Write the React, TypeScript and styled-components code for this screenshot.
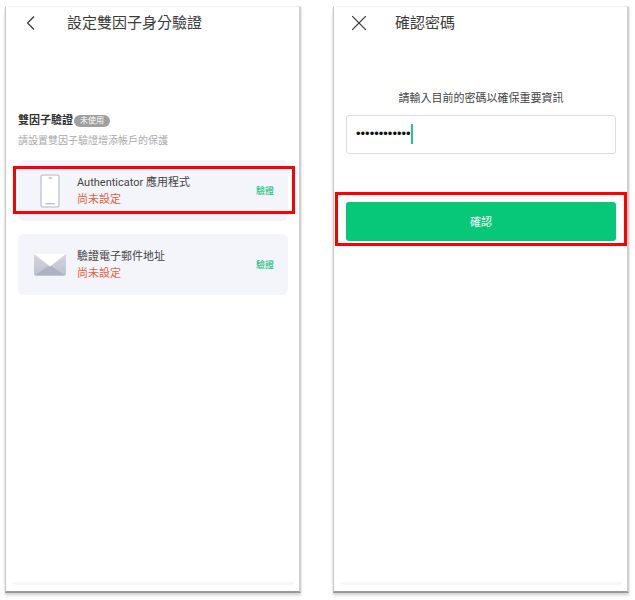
import React, { useState } from "react";
import styled, { createGlobalStyle } from "styled-components";

const GlobalStyle = createGlobalStyle`
  *, *::before, *::after { box-sizing: border-box; }
  body {
    margin: 0;
    background: #fff;
    color: #444;
    font-family: Roboto, "Noto Sans CJK TC", sans-serif;
  }
  button, input { font: inherit; margin: 0; }
`;

const Page = styled.main`
  display: grid;
  grid-template-columns: 1fr 1fr;
  gap: 32px;
  min-height: 100vh;
  padding: 6px 6px 7px 5px;
`;

const Screen = styled.section`
  display: flex;
  flex-direction: column;
  padding: 0 11px 0 12px;
  background: #fff;
  border: 1px solid #c8c8c8;
  border-top-color: #f2f2f2;
  border-right: 2px solid #d0d0d0;
  border-bottom: 2px solid #999;
  box-shadow: 0 2px 3px rgba(0, 0, 0, 0.2);
`;

const Header = styled.header`
  display: flex;
  align-items: center;
  gap: 28px;
  height: 32px;
`;

const IconButton = styled.button`
  display: flex;
  padding: 0 0 0 5px;
  border: 0;
  background: none;
  color: #333;
`;

const Title = styled.h1`
  margin: 0;
  font-size: 15px;
  line-height: 20px;
  font-weight: 400;
  color: #3c3c3c;
`;

const Section = styled.div`
  margin-top: 73px;
`;

const Heading = styled.div`
  display: flex;
  align-items: center;
  gap: 1px;
`;

const SectionTitle = styled.h2`
  margin: 0;
  font-size: 11px;
  line-height: 18px;
  font-weight: 700;
  color: #333;
`;

const Badge = styled.span`
  padding: 0 6px;
  border-radius: 6px;
  background: #a0a0a0;
  color: #fff;
  font-size: 8px;
  line-height: 12px;
`;

const Description = styled.p`
  margin: 2px 0 10px;
  font-size: 10px;
  line-height: 18px;
  color: #aaa;
`;

const MethodList = styled.ul`
  display: flex;
  flex-direction: column;
  gap: 13px;
  margin: 0;
  padding: 0;
  list-style: none;
`;

const Method = styled.li`
  position: relative;
  display: flex;
  align-items: center;
  gap: 10px;
  min-height: 61px;
  padding: 0 14px 0 15px;
  border-radius: 6px;
  background: #f4f5fa;
`;

const MethodIcon = styled.span`
  display: flex;
  justify-content: center;
  width: 34px;
`;

const MethodText = styled.div`
  flex: 1;
  font-size: 11px;
  line-height: 17px;
`;

const MethodName = styled.div`
  color: #444;
`;

const MethodStatus = styled.div`
  color: #e8603f;
`;

const VerifyButton = styled.button`
  padding: 0;
  border: 0;
  background: none;
  color: #2cc487;
  font-size: 9px;
  line-height: 16px;
  font-weight: 500;
`;

const Highlight = styled.span<{ $inset: string }>`
  position: absolute;
  inset: ${(p) => p.$inset};
  border: 3px solid #f00;
  pointer-events: none;
`;

const BottomBar = styled.div`
  height: 3px;
  margin: auto -6px 6px;
  background: #f7f7f7;
`;

const Form = styled.form`
  display: flex;
  flex-direction: column;
  margin-top: 51px;
`;

const Prompt = styled.label`
  margin-bottom: 7px;
  text-align: center;
  font-size: 11px;
  line-height: 18px;
  color: #444;
`;

const Field = styled.div`
  display: flex;
  align-items: center;
  height: 39px;
  padding: 0 9px 1px;
  border: 1px solid #dedede;
  border-radius: 3px;
`;

const PasswordInput = styled.input`
  field-sizing: content;
  max-width: 100%;
  padding: 0;
  border: 0;
  outline: 0;
  background: none;
  color: #111;
  caret-color: transparent;
  font-family: "Liberation Sans", sans-serif;
  font-size: 13px;
  line-height: 20px;
`;

const Caret = styled.span`
  width: 2px;
  height: 20px;
  background: #2cc487;
`;

const SubmitWrap = styled.div`
  position: relative;
  margin-top: 48px;
`;

const SubmitButton = styled.button`
  display: block;
  width: 100%;
  height: 39px;
  padding: 0 0 2px;
  border: 0;
  border-radius: 3px;
  background: #07c778;
  color: #fff;
  font-size: 11px;
`;

const BackIcon = () => (
  <svg width="16" height="16" viewBox="0 0 16 16" fill="none" stroke="currentColor" strokeWidth="1.2" aria-hidden="true">
    <path d="M11 1.5 4.500 8l6.500 6.500" />
  </svg>
);

const CloseIcon = () => (
  <svg width="16" height="16" viewBox="0 0 16 16" fill="none" stroke="currentColor" strokeWidth="1.2" aria-hidden="true">
    <path d="M1.200 1.200 14.800 14.800M14.800 1.200 1.200 14.800" />
  </svg>
);

const PhoneIcon = () => (
  <svg width="20" height="34" viewBox="0 0 20 34" aria-hidden="true">
    <rect x="1" y="1" width="18" height="32" rx="2" fill="#fff" stroke="#c9ccd9" strokeWidth="1.6" />
    <path d="M8.500 4h3.500" stroke="#b9bccb" strokeWidth="1.4" />
    <path d="M5.500 29.700h9" stroke="#b9bccb" strokeWidth="1.4" />
  </svg>
);

const MailIcon = () => (
  <svg width="34" height="22" viewBox="0 0 34 22" aria-hidden="true">
    <defs>
      <linearGradient id="mailSide" x1="0" y1="0" x2="0" y2="1">
        <stop offset="0" stopColor="#d3d5df" />
        <stop offset="1" stopColor="#bfc2cf" />
      </linearGradient>
    </defs>
    <path d="M1 0h32v20a1.500 1.500 0 0 1-1.500 1.500h-29A1.500 1.500 0 0 1 1 20z" fill="url(#mailSide)" />
    <path d="M1.800 21.200 17 11l15.200 10.200-.7.300h-29z" fill="#aeb2c2" />
    <path d="M1 0h32L17 12.500z" fill="#fff" />
  </svg>
);

const methods = [
  { name: "Authenticator 應用程式", icon: <PhoneIcon />, highlighted: true },
  { name: "驗證電子郵件地址", icon: <MailIcon />, highlighted: false },
];

export default function App() {
  const [password, setPassword] = useState("abcdefghijkl");

  return (
    <>
      <GlobalStyle />
      <Page>
        <Screen>
          <Header>
            <IconButton type="button" aria-label="返回">
              <BackIcon />
            </IconButton>
            <Title>設定雙因子身分驗證</Title>
          </Header>
          <Section>
            <Heading>
              <SectionTitle>雙因子驗證</SectionTitle>
              <Badge>未使用</Badge>
            </Heading>
            <Description>請設置雙因子驗證增添帳戶的保護</Description>
            <MethodList>
              {methods.map((m) => (
                <Method key={m.name}>
                  <MethodIcon>{m.icon}</MethodIcon>
                  <MethodText>
                    <MethodName>{m.name}</MethodName>
                    <MethodStatus>尚未設定</MethodStatus>
                  </MethodText>
                  <VerifyButton type="button">驗證</VerifyButton>
                  {m.highlighted && <Highlight $inset="6px -7px 7px -5px" />}
                </Method>
              ))}
            </MethodList>
          </Section>
          <BottomBar />
        </Screen>
        <Screen>
          <Header>
            <IconButton type="button" aria-label="關閉">
              <CloseIcon />
            </IconButton>
            <Title>確認密碼</Title>
          </Header>
          <Form onSubmit={(e) => e.preventDefault()}>
            <Prompt htmlFor="password">請輸入目前的密碼以確保重要資訊</Prompt>
            <Field>
              <PasswordInput
                id="password"
                type="password"
                value={password}
                onChange={(e) => setPassword(e.target.value)}
              />
              <Caret />
            </Field>
            <SubmitWrap>
              <SubmitButton type="submit">確認</SubmitButton>
              <Highlight $inset="-10px -11px -5px" />
            </SubmitWrap>
          </Form>
          <BottomBar />
        </Screen>
      </Page>
    </>
  );
}
